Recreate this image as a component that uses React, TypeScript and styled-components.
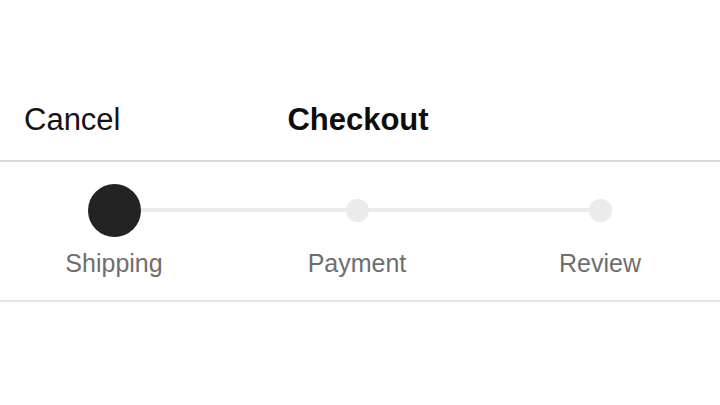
import React from "react";
import styled, { createGlobalStyle } from "styled-components";

const GlobalStyle = createGlobalStyle`
  html, body {
    margin: 0;
    padding: 0;
    background: #ffffff;
  }
  body {
    font-family: "Liberation Sans", Arial, sans-serif;
    -webkit-font-smoothing: antialiased;
  }
`;

const Page = styled.div`
  width: 720px;
  height: 405px;
  background: #ffffff;
  padding-top: 80px;
  box-sizing: border-box;
`;

const Header = styled.header`
  height: 80px;
  display: grid;
  grid-template-columns: 1fr auto 1fr;
  align-items: center;
  padding: 0 28px 0 24px;
  border-bottom: 2px solid #dadada;
`;

const Cancel = styled.button`
  justify-self: start;
  border: none;
  background: none;
  padding: 0;
  font-family: inherit;
  font-size: 31px;
  color: #141414;
  cursor: pointer;
`;

const Title = styled.h1`
  margin: 0;
  font-size: 31px;
  font-weight: 700;
  color: #0d0d0d;
`;

const Stepper = styled.section`
  padding: 21px 0 23px;
  border-bottom: 2px solid #e6e6e6;
`;

const Track = styled.div`
  display: flex;
  align-items: center;
  height: 54px;
  padding-left: 88px;
`;

const Dot = styled.div<{ $active?: boolean }>`
  flex: none;
  width: ${(p) => (p.$active ? 53 : 23)}px;
  height: ${(p) => (p.$active ? 53 : 23)}px;
  border-radius: 50%;
  background: ${(p) => (p.$active ? "#232323" : "#ebebeb")};
`;

const Connector = styled.div<{ $w: number }>`
  flex: none;
  width: ${(p) => p.$w}px;
  height: 4px;
  background: #ececec;
`;

const Labels = styled.div`
  display: flex;
  gap: 123px;
  padding-left: 54px;
  margin-top: 12px;
`;

const Label = styled.span`
  width: 120px;
  text-align: center;
  font-size: 25px;
  line-height: 28px;
  color: #6e6e6e;
  white-space: nowrap;
`;

export default function App() {
  return (
    <>
      <GlobalStyle />
      <Page>
        <Header>
          <Cancel>Cancel</Cancel>
          <Title>Checkout</Title>
          <span />
        </Header>
        <Stepper>
          <Track>
            <Dot $active />
            <Connector $w={205} />
            <Dot />
            <Connector $w={220} />
            <Dot />
          </Track>
          <Labels>
            <Label>Shipping</Label>
            <Label>Payment</Label>
            <Label>Review</Label>
          </Labels>
        </Stepper>
      </Page>
    </>
  );
}
